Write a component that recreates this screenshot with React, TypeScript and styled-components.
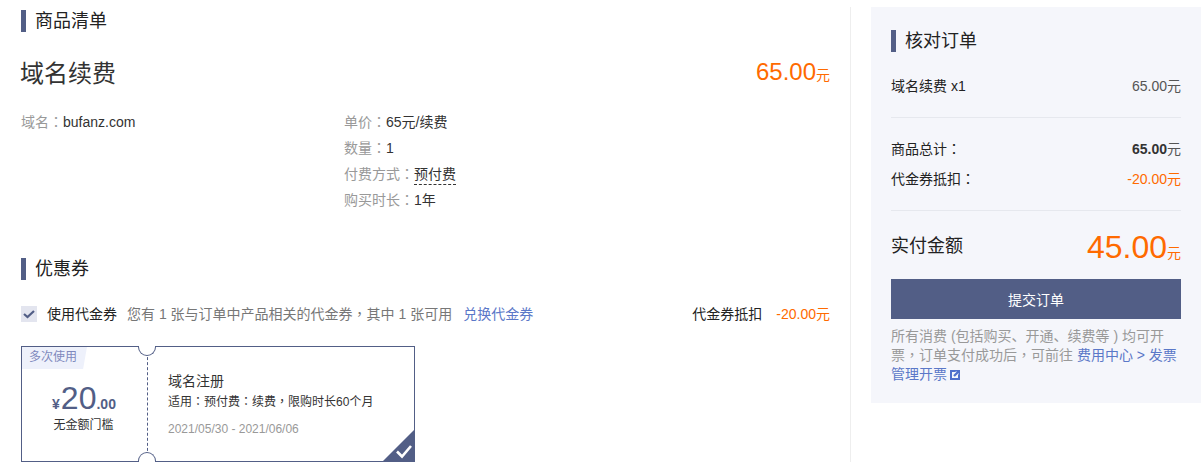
import React from "react";
import styled, { createGlobalStyle } from "styled-components";

const Global = createGlobalStyle`
  html, body { margin: 0; padding: 0; background: #fff; }
  body { font-family: "Liberation Sans", "Noto Sans CJK SC", Arial, sans-serif; font-size: 14px; color: #333; }
`;

const Page = styled.div`
  display: flex;
  align-items: flex-start;
  width: 1201px;
  height: 476px;
  padding-top: 7px;
  box-sizing: border-box;
  overflow: hidden;
`;
const Main = styled.main`
  width: 809px;
  padding: 3px 21px 0 21px;
  height: 452px;
  flex: none;
`;
const Divider = styled.div`
  width: 1px;
  height: 455px;
  background: #eeeeee;
  margin-left: -1px;
  flex: none;
`;
const Title = styled.h2<{ $top?: number }>`
  margin: ${(p) => p.$top ?? 0}px 0 0;
  height: 22px;
  line-height: 22px;
  font-size: 18px;
  font-weight: 400;
  color: #222;
  border-left: 5px solid #525e86;
  padding-left: 10px;
  text-indent: -1px;
`;
const Punct = styled.span`
  font-family: "Noto Sans CJK TC", sans-serif;
  line-height: 0;
`;
const ProductHead = styled.div`
  display: flex;
  justify-content: space-between;
  align-items: center;
  height: 34px;
  margin-top: 22px;
`;
const ProductName = styled.div`
  font-size: 24px;
  color: #333;
  margin-left: -1px;
`;
const Price = styled.div`
  font-size: 24px;
  color: #ff6a00;
  margin-top: 2px;
  small { font-size: 14px; }
`;
const Details = styled.div`
  display: flex;
  margin-top: 21px;
  line-height: 26px;
`;
const DomainCol = styled.div`
  width: 323px;
  flex: none;
`;
const InfoCol = styled.div`
  display: flex;
  flex-direction: column;
`;
const Muted = styled.span`
  color: #999;
`;
const Dashed = styled.span`
  border-bottom: 1px dashed #333;
  padding-bottom: 2px;
`;
const VoucherRow = styled.div`
  display: flex;
  align-items: center;
  height: 26px;
  margin-top: 20px;
`;
const CheckBox = styled.span`
  width: 16px;
  height: 16px;
  margin-top: 2px;
  background: #e3e5ef;
  display: flex;
  align-items: center;
  justify-content: center;
  margin-right: 10px;
  flex: none;
`;
const Strong = styled.span`
  color: #222;
`;
const Hint = styled.span`
  color: #777;
  margin-left: 10px;
`;
const Link = styled.a`
  color: #5b78c8;
  text-decoration: none;
`;
const ExchangeLink = styled(Link)`
  margin-left: 11px;
`;
const Deduct = styled.div`
  margin-left: auto;
  color: #222;
  span { color: #ff6a00; margin-left: 14px; }
`;
const Coupon = styled.div`
  position: relative;
  display: flex;
  width: 392px;
  height: 114px;
  margin-top: 20px;
  border: 1px solid #525e86;
`;
const Tag = styled.div`
  position: absolute;
  left: 0;
  top: 0;
  width: 65px;
  height: 22px;
  line-height: 21px;
  padding-left: 7px;
  box-sizing: border-box;
  font-size: 12px;
  color: #7f89bd;
  background: #eef1fb;
  clip-path: polygon(0 0, 100% 0, 94% 100%, 0 100%);
`;
const Notch = styled.span<{ $side: "top" | "bottom" }>`
  position: absolute;
  left: 116px;
  ${(p) => p.$side}: -1px;
  width: 16px;
  height: 9px;
  background: #fff;
  border: 1px solid #525e86;
  ${(p) =>
    p.$side === "top"
      ? "border-top: none; border-radius: 0 0 10px 10px;"
      : "border-bottom: none; border-radius: 10px 10px 0 0;"}
`;
const CouponLeft = styled.div`
  width: 125px;
  flex: none;
  padding-top: 37px;
  box-sizing: border-box;
  display: flex;
  flex-direction: column;
  align-items: center;
`;
const Amount = styled.div`
  color: #525e86;
  font-size: 32px;
  line-height: 28px;
  display: flex;
  align-items: baseline;
  margin-left: -1px;
  b { font-size: 14px; }
  i { font-size: 14px; font-style: normal; font-weight: 700; margin-right: 1px; }
`;
const Threshold = styled.div`
  font-size: 12px;
  line-height: 14px;
  color: #333;
  margin-left: -2px;
`;
const CouponRight = styled.div`
  flex: 1;
  border-left: 1px dashed #525e86;
  padding: 25px 0 0 20px;
`;
const CouponName = styled.div`
  font-size: 14px;
  line-height: 18px;
  color: #333;
`;
const CouponRule = styled.div`
  font-size: 12px;
  line-height: 20px;
  margin-top: 2px;
  color: #333;
`;
const CouponDate = styled.div`
  font-size: 12px;
  line-height: 16px;
  margin-top: 9px;
  color: #999;
`;
const Corner = styled.svg`
  position: absolute;
  right: -1px;
  bottom: -1px;
`;
const Aside = styled.aside`
  width: 290px;
  margin-left: 20px;
  padding: 23px 20px 19px;
  background: #f5f6fb;
  flex: none;
`;
const SummaryRow = styled.div<{ $height: number }>`
  display: flex;
  justify-content: space-between;
  align-items: center;
  height: ${(p) => p.$height}px;
  color: #222;
`;
const Value = styled.span<{ $orange?: boolean }>`
  color: ${(p) => (p.$orange ? "#ff6a00" : "#555")};
  b { color: #333; }
`;
const Rule = styled.hr<{ $top: number; $bottom: number }>`
  border: none;
  height: 1px;
  background: #e6e8ee;
  margin: ${(p) => p.$top}px 0 ${(p) => p.$bottom}px;
`;
const FirstRow = styled(SummaryRow)`
  margin-top: 20px;
`;
const Total = styled.div`
  display: flex;
  justify-content: space-between;
  align-items: center;
  height: 68px;
  color: #222;
  font-size: 18px;
`;
const TotalLabel = styled.span`
  padding-bottom: 2px;
`;
const TotalValue = styled.div`
  color: #ff6a00;
  font-size: 32px;
  padding-top: 4px;
  small { font-size: 14px; }
`;
const Submit = styled.button`
  display: block;
  width: 100%;
  height: 40px;
  border: none;
  background: #525e86;
  color: #fff;
  font: inherit;
  font-size: 14px;
`;
const Note = styled.p`
  margin: 8px 0 0;
  line-height: 19px;
  color: #999;
  font-size: 14px;
  svg { vertical-align: -1px; margin-left: 3px; }
`;

export default function App() {
  return (
    <Page>
      <Global />
      <Main>
        <Title>商品清单</Title>
        <ProductHead>
          <ProductName>域名续费</ProductName>
          <Price>65.00<small>元</small></Price>
        </ProductHead>
        <Details>
          <DomainCol><Muted>域名<Punct>：</Punct></Muted>bufanz.com</DomainCol>
          <InfoCol>
            <div><Muted>单价<Punct>：</Punct></Muted>65元/续费</div>
            <div><Muted>数量<Punct>：</Punct></Muted>1</div>
            <div><Muted>付费方式<Punct>：</Punct></Muted><Dashed>预付费</Dashed></div>
            <div><Muted>购买时长<Punct>：</Punct></Muted>1年</div>
          </InfoCol>
        </Details>
        <Title $top={45}>优惠券</Title>
        <VoucherRow>
          <CheckBox>
            <svg width="12" height="12" viewBox="0 0 12 12">
              <path d="M1 6 L4.5 9 L11 3" fill="none" stroke="#525e86" strokeWidth="2.2" />
            </svg>
          </CheckBox>
          <Strong>使用代金券</Strong>
          <Hint>您有 1 张与订单中产品相关的代金券<Punct>，</Punct>其中 1 张可用</Hint>
          <ExchangeLink>兑换代金券</ExchangeLink>
          <Deduct>代金券抵扣<span>-20.00元</span></Deduct>
        </VoucherRow>
        <Coupon>
          <Tag>多次使用</Tag>
          <Notch $side="top" />
          <Notch $side="bottom" />
          <CouponLeft>
            <Amount><i>¥</i>20<b>.00</b></Amount>
            <Threshold>无金额门槛</Threshold>
          </CouponLeft>
          <CouponRight>
            <CouponName>域名注册</CouponName>
            <CouponRule>适用<Punct>：</Punct>预付费<Punct>：</Punct>续费<Punct>，</Punct>限购时长60个月</CouponRule>
            <CouponDate>2021/05/30 - 2021/06/06</CouponDate>
          </CouponRight>
          <Corner width="33" height="33" viewBox="0 0 33 33">
            <path d="M33 0 V33 H0 Z" fill="#525e86" />
            <path d="M15 22.5 L20 27.5 L29 17" fill="none" stroke="#fff" strokeWidth="2.6" />
          </Corner>
        </Coupon>
      </Main>
      <Divider />
      <Aside>
        <Title>核对订单</Title>
        <FirstRow $height={26}>
          <span>域名续费 x1</span>
          <Value>65.00元</Value>
        </FirstRow>
        <Rule $top={19} $bottom={15} />
        <SummaryRow $height={30}>
          <span>商品总计<Punct>：</Punct></span>
          <Value><b>65.00</b>元</Value>
        </SummaryRow>
        <SummaryRow $height={30}>
          <span>代金券抵扣<Punct>：</Punct></span>
          <Value $orange>-20.00元</Value>
        </SummaryRow>
        <Rule $top={17} $bottom={0} />
        <Total>
          <TotalLabel>实付金额</TotalLabel>
          <TotalValue>45.00<small>元</small></TotalValue>
        </Total>
        <Submit>提交订单</Submit>
        <Note>
          所有消费 (包括购买、开通、续费等 ) 均可开票<Punct>，</Punct>订单支付成功后<Punct>，</Punct>可前往 <Link>费用中心 &gt; 发票管理开票
            <svg width="10" height="10" viewBox="0 0 10 10">
              <path d="M0 0 H5.5 V2 H2 V8 H8 V4.5 H10 V10 H0 Z" fill="#4f6fcc" />
              <path d="M5 0 H10 V5 H8.6 V3 L4.8 6.8 L3.2 5.2 L7 1.4 H5 Z" fill="#4f6fcc" />
            </svg>
          </Link>
        </Note>
      </Aside>
    </Page>
  );
}
